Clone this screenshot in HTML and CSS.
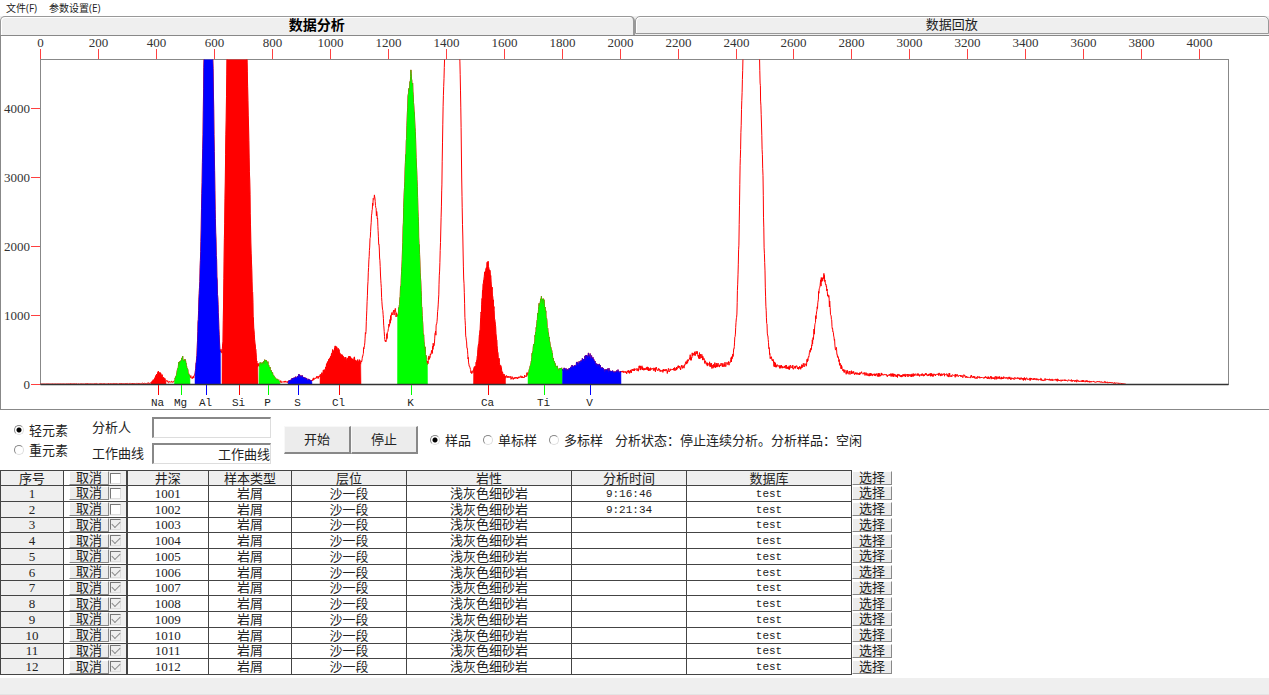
FILE: index.html
```html
<!DOCTYPE html>
<html lang="zh-CN">
<head>
<meta charset="utf-8">
<title>数据分析</title>
<link rel="stylesheet" href="styles.css">
</head>
<body>
<nav class="menu">
  <button type="button" class="menu-item">文件(F)</button>
  <button type="button" class="menu-item">参数设置(E)</button>
</nav>
<div class="tabs" role="tablist">
  <button type="button" class="tab tab-active" role="tab" aria-selected="true">数据分析</button>
  <button type="button" class="tab" role="tab" aria-selected="false">数据回放</button>
</div>
<main class="page">
  <section class="chart">
    <svg id="spectrum" class="spectrum" viewBox="1 36 1268 373" role="img" aria-label="能谱图"></svg>
  </section>

  <form class="controls">
    <div class="elements">
      <label class="choice"><input class="radio" type="radio" name="element" checked>轻元素</label>
      <label class="choice"><input class="radio" type="radio" name="element">重元素</label>
    </div>
    <div class="fields">
      <label for="analyst">分析人</label>
      <input class="field" id="analyst" type="text">
      <label for="curve">工作曲线</label>
      <input class="field field-right" id="curve" type="text" value="工作曲线">
    </div>
    <div class="actions">
      <button type="button" class="action">开始</button>
      <button type="button" class="action">停止</button>
    </div>
    <div class="modes">
      <label class="choice"><input class="radio" type="radio" name="mode" checked>样品</label>
      <label class="choice"><input class="radio" type="radio" name="mode">单标样</label>
      <label class="choice"><input class="radio" type="radio" name="mode">多标样</label>
    </div>
    <output class="status">分析状态：停止连续分析。分析样品：空闲</output>
  </form>

  <table class="samples">
    <colgroup>
      <col class="c-no"><col class="c-cancel"><col class="c-depth"><col class="c-type"><col class="c-layer">
      <col class="c-rock"><col class="c-time"><col class="c-db"><col class="c-pick">
    </colgroup>
    <thead>
      <tr>
        <th>序号</th>
        <th class="cancel"><div class="cancel-box"><button type="button" class="mini">取消</button><input class="check" type="checkbox" aria-label="全部"></div></th>
        <th>井深</th><th>样本类型</th><th>层位</th><th>岩性</th><th>分析时间</th><th>数据库</th>
        <th class="pick"><button type="button" class="mini">选择</button></th>
      </tr>
    </thead>
    <tbody id="rows"></tbody>
  </table>
</main>
<footer class="statusbar"></footer>
<script src="app.js"></script>
</body>
</html>
```

FILE: styles.css
```css
* {
  box-sizing: border-box;
}

body {
  margin: 0;
  min-height: 100vh;
  display: flex;
  flex-direction: column;
  background: #fff;
  color: #222;
  font: 13px/15px "Liberation Serif", "Noto Sans CJK SC", serif;
}

button,
input {
  margin: 0;
  padding: 0;
  color: inherit;
  font: inherit;
}

.menu {
  display: flex;
  gap: 12px;
  height: 16px;
  padding-left: 6px;
}

.menu-item {
  border: 0;
  background: none;
  font: 10px/16px "Open Sans", "Noto Sans CJK SC", sans-serif;
}

.tabs {
  display: grid;
  grid-template-columns: 1fr 1fr;
  height: 19px;
  background: #efefef;
}

.tab {
  margin-bottom: 1px;
  border: 1px solid #999;
  border-radius: 5px 5px 0 0;
  background: #efefef;
  box-shadow: inset 1px 1px #fff;
  line-height: 16px;
}

.tab-active {
  margin-bottom: 0;
  border-right-width: 2px;
  border-bottom: 0;
  color: #000;
  font-size: 14px;
  font-weight: bold;
  line-height: 18px;
}

.chart {
  border-top: 1px solid #888;
  border-bottom: 1px solid #888;
  border-left: 1px solid #888;
}

.spectrum {
  display: block;
  width: 100%;
  height: auto;
}

.axis-text {
  fill: #333;
  font-size: 13px;
}

.element-text {
  fill: #222;
  font: 11px "Liberation Mono", monospace;
}

.controls {
  display: flex;
  align-items: center;
  height: 60px;
  padding-left: 14px;
}

.choice {
  display: flex;
  align-items: center;
  gap: 5px;
  white-space: nowrap;
}

.elements {
  display: grid;
  gap: 5px;
  width: 78px;
}

.radio {
  appearance: none;
  flex: none;
  width: 10px;
  height: 10px;
  border: 1px solid;
  border-color: #888 #ddd #ddd #888;
  border-radius: 50%;
  background: #fff;
}

.radio:checked {
  background: radial-gradient(circle, #000 2px, #fff 3px);
}

.fields {
  display: grid;
  grid-template-columns: 60px 119px;
  row-gap: 5px;
  align-items: center;
}

.field {
  width: 100%;
  height: 21px;
  border: 1px solid;
  border-width: 2px 1px 1px 2px;
  border-color: #888 #ddd #ddd #888;
  background: #fff;
}

.field-right {
  text-align: right;
}

.actions {
  display: flex;
  margin-left: 13px;
}

.action {
  width: 67px;
  height: 28px;
  border: 1px solid;
  border-width: 1px 2px 2px 1px;
  border-color: #f8f8f8 #888 #888 #f8f8f8;
  background: #ececec;
}

.modes {
  display: flex;
  gap: 12px;
  margin-left: 12px;
}

.status {
  margin-left: 12px;
  white-space: nowrap;
}

.samples {
  width: 893px;
  height: 205px;
  margin-bottom: 3px;
  border-collapse: collapse;
  table-layout: fixed;
  line-height: 13px;
  text-align: center;
}

.c-no { width: 63px; }
.c-cancel { width: 63px; }
.c-depth { width: 82px; }
.c-type { width: 83px; }
.c-layer, .c-time { width: 115px; }
.c-rock, .c-db { width: 165px; }
.c-pick { width: 42px; }

.samples th,
.samples td {
  height: 14px;
  padding: 0;
  border: 1px solid #444;
  font-weight: normal;
  white-space: nowrap;
}

.samples thead th,
.samples .no {
  background: #efefef;
}

.samples .mono {
  font: 11px/13px "Liberation Mono", monospace;
  vertical-align: bottom;
}

.samples .cancel {
  border-right-width: 2px;
  background: #fff;
}

.samples .pick {
  border-width: 0 0 0 1px;
  background: #fff;
}

.cancel-box {
  display: flex;
  align-items: center;
  margin-left: 5px;
  background: #efefef;
}

.mini {
  display: block;
  height: 14px;
  width: 40px;
  border: 1px solid;
  border-color: #fff #888 #888 #fff;
  background: #ececec;
  line-height: 12px;
}

.check {
  appearance: none;
  width: 11px;
  height: 11px;
  margin-left: 1px;
  border: 1px solid;
  border-color: #777 #ddd #ddd #777;
  background: #fff;
}

.check:checked {
  background: #efefef;
}

.check:checked::after {
  content: "";
  display: block;
  width: 7px;
  height: 4px;
  margin: 1px;
  border: solid #888;
  border-width: 0 0 1px 1px;
  transform: rotate(-45deg);
}

.statusbar {
  flex: 1;
  background: #efefef;
  border-bottom: 1px solid #e4e4e4;
}
```

FILE: app.js
```js
const LEFT = 40.5, RIGHT = 1228.5, TOP = 59.5, BASE = 384;
const RED = "#f00", GREEN = "#0f0", BLUE = "#00f";

// Smoothed spectrum: x,y pairs in chart units
const curve = [
  [40,384],[105,383.8],[140,383.6],[151,383],[154,380],[159,372],[165,380],[168,382],[174,382],[176,376],
  [179,364],[182,359],[185,360],[189,376],[191,377],[193,378],[195,373],[197,355],[199,300],[201,240],
  [203,130],[204,60],[206,20],[211,20],[213,60],[214,130],[215,200],[217,280],[219,330],[220,350],[222,352],
  [223,340],[225,200],[227,60],[228,20],[246,20],[247,60],[249,150],[251,250],[253,310],[255,345],[257,364],
  [259,366],[261,364],[265,362],[268,364],[272,373],[276,379],[280,381.5],[287,382],[291,380],[295,378],
  [299,375.5],[304,378],[311,380.5],[316,378],[320,376],[325,370],[329,361],[333,352],[336,349],[340,353],
  [344,359],[350,359],[357,361],[361,363],[364,350],[366,330],[368,280],[370,240],[372,210],[373.5,199],
  [374.2,196],[374.5,189],[374.8,197],[376,207],[378,225],[380,265],[382,300],[384,330],[385.5,342],
  [388,330],[390,320],[392,313],[395,312],
  [398,317],[400,300],[402,265],[404,200],[406,150],[408,100],[410,82],[410.6,80],[411,69],[411.4,80],
  [413,90],[415,125],
  [417,180],[419,240],[421,290],[423,330],[425,350],[427,365],[430,356],[434,345],[436,330],[438,310],
  [440,260],[442,180],[443,110],[444.5,60],[446,20],[458,20],[460,60],[461,120],[462,200],[463.5,270],
  [465,320],[467,350],[469,365],[471,372],[473,371],[475,368],[477,360],[480,330],[482,300],[484,280],
  [486,269],[488,266],[490,270],[492,290],[494,310],[496,335],[498,355],[500,366],[503,374],[506,377],
  [512,378],[524,377],[528,374],[531,363],[534,345],[536,330],[538,312],[540,302],[542,299],[544,302],
  [546,315],[549,338],[552,355],[555,365],[558,369],[565,370],[573,367],[580,362],[585,358],[590,356],
  [594,360],[598,366],[604,370],[620,372],[630,372],[640,368],[655,369],[667,371],[678,368],[684,366],
  [690,358],[696,353],[702,357],[706,363],[712,366],[725,365],[730,362],[733,356],[735,340],[737,310],
  [738,275],[739,240],[740,170],[741,130],[743,60],[744,20],[758,20],[759.5,60],[761,110],[763,180],
  [764,240],[766,310],[768,340],[770,355],[774,364],[780,367],[800,367],[806,364],[809,355],[812,345],
  [815,325],[818,300],[820,285],[822,279],[824,276],[826,284],[829,300],[832,325],[835,345],[838,358],
  [841,367],[844,372],[870,374.5],[900,375.5],[940,374.5],[970,377],[1000,378],[1040,379.5],[1080,381],
  [1100,382],[1120,383.3],[1126,384]
];

const elements = [
  ["Na", 158.5, 151, 166, RED], ["Mg", 181.5, 174.5, 190, GREEN], ["Al", 206.5, 195, 220.5, BLUE],
  ["Si", 239.5, 222, 258, RED], ["P", 268.5, 259, 280, GREEN], ["S", 298.5, 288, 312, BLUE],
  ["Cl", 339.5, 320, 361, RED], ["K", 411.5, 397.5, 427.5, GREEN], ["Ca", 488.5, 473.5, 505.5, RED],
  ["Ti", 544.5, 528, 562.5, GREEN], ["V", 590.5, 562.5, 621, BLUE]
];

// Repeatable counting noise
let seed = 7;
const random = () => (seed = (seed * 16807) % 2147483647) / 2147483647;

const points = [];
for (let i = 0, x = 40; x < 1126; x += 0.29) {
  while (x > curve[i + 1][0]) i++;
  const [x0, y0] = curve[i], [x1, y1] = curve[i + 1];
  const y = y0 + (y1 - y0) * (x - x0) / (x1 - x0);
  const noise = Math.min(3, 0.4 * Math.sqrt(Math.max(0, BASE - y)));
  points.push([x, y + (random() + random() - 1) * noise * 1.9]);
}
const toText = list => list.map(([x, y]) => x.toFixed(1) + "," + y.toFixed(1)).join(" ");

let svg = `<clipPath id="plot"><rect x="${LEFT}" y="${TOP}" width="${RIGHT - LEFT}" height="${BASE - TOP + 1}"/></clipPath>
<rect x="${LEFT}" y="${TOP}" width="${RIGHT - LEFT}" height="${BASE - TOP + 0.5}" fill="none" stroke="#888"/>
<g clip-path="url(#plot)"><polyline points="${toText(points)}" fill="none" stroke="${RED}" stroke-width="1" stroke-linejoin="bevel"/>`;
for (const [, , from, to, color] of elements) {
  const part = points.filter(([x]) => x >= from && x <= to);
  svg += `<polygon points="${from},${BASE} ${toText(part)} ${to},${BASE}" fill="${color}" stroke="${color}" stroke-width="0.5" stroke-linejoin="bevel"/>`;
}
svg += `</g><path d="M${LEFT} 384.5H${RIGHT}" stroke="#333" stroke-width="1.5"/>`;

for (let n = 0; n <= 4000; n += 200) {
  const x = Math.round(40 + n * 0.2898) + 0.5;
  svg += `<path d="M${x} 49V59" stroke="#ff4040"/><text class="axis-text" x="${x}" y="47" text-anchor="middle">${n}</text>`;
}
for (let n = 0; n <= 4000; n += 1000) {
  const y = Math.round(384 - n * 0.0691) + 0.5;
  svg += `<path d="M31 ${y}H40" stroke="#ff4040"/><text class="axis-text" x="30" y="${y + 4}" text-anchor="end">${n}</text>`;
}
for (const [name, x, , , color] of elements) {
  svg += `<path d="M${x} 385V395" stroke="${color}"/><text class="element-text" x="${x - 1}" y="406" text-anchor="middle">${name}</text>`;
}
document.getElementById("spectrum").innerHTML = svg;

const times = ["9:16:46", "9:21:34"];
document.getElementById("rows").innerHTML = Array.from({ length: 12 }, (_, i) => `<tr>
  <td class="no">${i + 1}</td>
  <td class="cancel"><div class="cancel-box"><button type="button" class="mini">取消</button><input class="check" type="checkbox" aria-label="样本 ${i + 1}"${i > 1 ? " checked" : ""}></div></td>
  <td>${1001 + i}</td><td>岩屑</td><td>沙一段</td><td>浅灰色细砂岩</td>
  <td class="mono">${times[i] || ""}</td><td class="mono">test</td>
  <td class="pick"><button type="button" class="mini">选择</button></td>
</tr>`).join("");
```
